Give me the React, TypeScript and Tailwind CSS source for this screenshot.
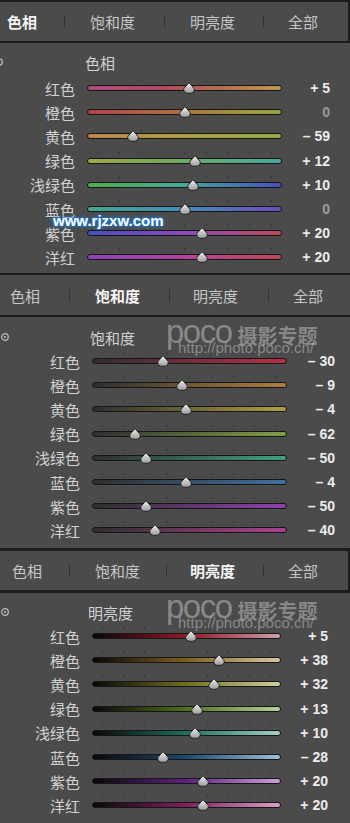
import React from "react";

type Row = { label: string; value: number; g: string };

type Panel = {
  title: string;
  active: number;
  height: string;
  topLine: string;
  tabBar: string;
  sepLine: string;
  tabMl: string[];
  contentPad: string;
  iconMl: string;
  titleMl: string;
  rowsMt: string;
  labelW: string;
  trackW: string;
  valueW: string;
  rows: Row[];
  poco?: boolean;
};

const labels = ["红色", "橙色", "黄色", "绿色", "浅绿色", "蓝色", "紫色", "洋红"];

const hueG = [
  "linear-gradient(90deg,#a84e82,#b44860 40%,#bc844c 85%,#bc9a52)",
  "linear-gradient(90deg,#b4424a,#ac6e40 45%,#a09a3e 85%,#98a43e)",
  "linear-gradient(90deg,#bc864c,#ac9e46 50%,#92ac44)",
  "linear-gradient(90deg,#a0a844,#6caa62 50%,#44a8a0)",
  "linear-gradient(90deg,#52ac4c,#44a89c 50%,#4c4cbc)",
  "linear-gradient(90deg,#44a88c,#448cb8 50%,#6c4cbc)",
  "linear-gradient(90deg,#4c4cbc,#8a4cb8 50%,#bc4c5a)",
  "linear-gradient(90deg,#8a44bc,#b4449c 50%,#bc4c52)",
];

const satEnd = ["#b83048", "#b08040", "#b0a040", "#80a048", "#40a080", "#4070a0", "#9040b0", "#b04090"];
const satG = satEnd.map((c) => `linear-gradient(90deg,#2e2e2e,${c})`);

const lumMid = [
  ["#901828", "#d0a0a8"],
  ["#806020", "#d8c8a0"],
  ["#707020", "#d0d0a0"],
  ["#507020", "#b8d0a0"],
  ["#207060", "#a0d0c8"],
  ["#204870", "#a0c0d8"],
  ["#602080", "#c8a0d8"],
  ["#802060", "#d8a0c8"],
];
const lumG = lumMid.map(([m, e]) => `linear-gradient(90deg,#080808,${m} 50%,${e})`);

const mk = (vals: number[], gs: string[]): Row[] =>
  labels.map((label, i) => ({ label, value: vals[i], g: gs[i] }));

const panels: Panel[] = [
  {
    title: "色相",
    active: 0,
    height: "h-[273px]",
    topLine: "h-[2px]",
    tabBar: "h-[39px] border-r-2 border-[#1c1c1c]",
    sepLine: "h-[2px]",
    tabMl: ["ml-[7px]", "ml-[27px]", "ml-[25px]", "ml-[29px]", "ml-[25px]", "ml-[28px]", "ml-[24px]"],
    contentPad: "pt-[7px]",
    iconMl: "-ml-[5px]",
    titleMl: "ml-[82px]",
    rowsMt: "mt-[2px]",
    labelW: "w-[75px]",
    trackW: "w-[195px]",
    valueW: "w-[48px]",
    rows: mk([5, 0, -59, 12, 10, 0, 20, 20], hueG),
  },
  {
    title: "饱和度",
    active: 1,
    height: "h-[275px]",
    topLine: "h-[2px]",
    tabBar: "h-[40px]",
    sepLine: "h-[2px]",
    tabMl: ["ml-[10px]", "ml-[29px]", "ml-[25px]", "ml-[29px]", "ml-[23px]", "ml-[30px]", "ml-[24px]"],
    contentPad: "pt-[8px]",
    iconMl: "ml-[1px]",
    titleMl: "ml-[81px]",
    rowsMt: "mt-0",
    labelW: "w-[80px]",
    trackW: "w-[195px]",
    valueW: "w-[48px]",
    rows: mk([-30, -9, -4, -62, -50, -4, -50, -40], satG),
    poco: true,
  },
  {
    title: "明亮度",
    active: 2,
    height: "h-[275px]",
    topLine: "h-[3px]",
    tabBar: "h-[39px] border-r-2 border-[#1c1c1c]",
    sepLine: "h-[3px]",
    tabMl: ["ml-[12px]", "ml-[27px]", "ml-[25px]", "ml-[26px]", "ml-[23px]", "ml-[28px]", "ml-[24px]"],
    contentPad: "pt-[7px]",
    iconMl: "ml-[1px]",
    titleMl: "ml-[79px]",
    rowsMt: "mt-0",
    labelW: "w-[80px]",
    trackW: "w-[189px]",
    valueW: "w-[47px]",
    rows: mk([5, 38, 32, 13, 10, -28, 20, 20], lumG),
    poco: true,
  },
];

const tabNames = ["色相", "饱和度", "明亮度", "全部"];

const cjk = "font-['Noto_Sans_CJK_SC','Noto_Sans',sans-serif]";

function fmt(v: number) {
  if (v > 0) return `+ ${v}`;
  if (v < 0) return `– ${Math.abs(v)}`;
  return "0";
}

function Thumb({ frac }: { frac: number }) {
  return (
    <svg
      width="13"
      height="12"
      viewBox="0 0 13 12"
      className="absolute top-1/2 -translate-x-1/2 -translate-y-1/2"
      style={{ left: `calc(10px + (100% - 20px) * ${frac})` }}
    >
      <defs>
        <linearGradient id="thumbG" x1="0" y1="0" x2="0" y2="1">
          <stop offset="0" stopColor="#f0f0f0" />
          <stop offset="1" stopColor="#9a9a9a" />
        </linearGradient>
      </defs>
      <path
        d="M6.5 0.6 L11.6 6.4 Q12.6 11.4 6.5 11.4 Q0.4 11.4 1.4 6.4 Z"
        fill="url(#thumbG)"
        stroke="#202020"
        strokeWidth="1"
      />
    </svg>
  );
}

function Slider({ row, p }: { row: Row; p: Panel }) {
  return (
    <div className="flex h-[24.2px] items-center">
      <div className={`${p.labelW} shrink-0 text-right text-[15px] leading-none text-[#d2d2d2] ${cjk}`}>
        {row.label}
      </div>
      <div className={`relative ml-[12px] h-[6px] ${p.trackW} shrink-0`}>
        <div className="absolute left-[10px] right-[10px] -top-[6px] flex justify-between">
          {Array.from({ length: 9 }).map((_, i) => (
            <div key={i} className="h-[2px] w-px bg-[#363636]" />
          ))}
        </div>
        <div
          className="h-full w-full rounded-full border border-[#161616]"
          style={{ backgroundImage: row.g }}
        />
        <Thumb frac={(row.value + 100) / 200} />
      </div>
      <div
        className={`${p.valueW} shrink-0 text-right font-['Liberation_Sans',Arial,sans-serif] text-[14px] leading-none font-bold ${
          row.value === 0 ? "text-[#9c9c9c]" : "text-[#ececec]"
        }`}
      >
        {fmt(row.value)}
      </div>
    </div>
  );
}

function HslPanel({ p }: { p: Panel }) {
  return (
    <div className={`relative flex ${p.height} flex-col overflow-hidden bg-[#4b4b4b]`}>
      <div className={`${p.topLine} shrink-0 bg-[#1c1c1c]`} />
      <div className={`flex ${p.tabBar} shrink-0 items-center ${cjk} text-[15px] leading-none`}>
        {tabNames.map((t, i) => (
          <React.Fragment key={t}>
            {i > 0 && <div className={`${p.tabMl[i * 2 - 1]} h-[13px] w-px shrink-0 bg-[#333333]`} />}
            <div
              className={`${p.tabMl[i * 2]} shrink-0 ${
                i === p.active ? "font-bold text-[#f4f4f4]" : "text-[#c6c6c6]"
              }`}
            >
              {t}
            </div>
          </React.Fragment>
        ))}
      </div>
      <div className={`${p.sepLine} shrink-0 bg-[#1c1c1c]`} />
      <div className={`flex flex-col ${p.contentPad}`}>
        <div className="flex h-6 items-center">
          <svg width="8" height="8" viewBox="0 0 8 8" className={`${p.iconMl} shrink-0`}>
            <circle cx="4" cy="4" r="3.3" fill="none" stroke="#bdbdbd" strokeWidth="1.2" />
            <circle cx="4" cy="4" r="1.1" fill="#bdbdbd" />
          </svg>
          <div className={`${p.titleMl} text-[15px] leading-none text-[#d2d2d2] ${cjk}`}>{p.title}</div>
        </div>
        <div className={`flex flex-col ${p.rowsMt}`}>
          {p.rows.map((r) => (
            <Slider key={r.label} row={r} p={p} />
          ))}
        </div>
      </div>
      {p.poco && (
        <div className="pointer-events-none absolute left-[166px] top-[42px] flex flex-col text-white/35">
          <div className="flex items-end">
            <span className="font-['Liberation_Sans',Arial,sans-serif] text-[33px] leading-none font-light tracking-[-1.5px]">
              poco
            </span>
            <span className={`ml-[6px] mb-[2px] text-[20px] leading-none font-bold ${cjk}`}>摄影专题</span>
          </div>
          <span className="ml-[12px] -mt-[8px] font-['Liberation_Sans',Arial,sans-serif] text-[15px] leading-none">
            http://photo.poco.cn/
          </span>
        </div>
      )}
    </div>
  );
}

export default function App() {
  return (
    <div className="relative w-[350px] bg-[#4b4b4b]">
      {panels.map((p) => (
        <HslPanel key={p.title} p={p} />
      ))}
      <div className="pointer-events-none absolute left-[53px] top-[213px] font-['Liberation_Sans',Arial,sans-serif] text-[15px] leading-none font-bold text-white [text-shadow:0_0_2px_#1a80e8,0_0_3px_#1a80e8,0_0_4px_#1a80e8]">
        www.rjzxw.com
      </div>
    </div>
  );
}
